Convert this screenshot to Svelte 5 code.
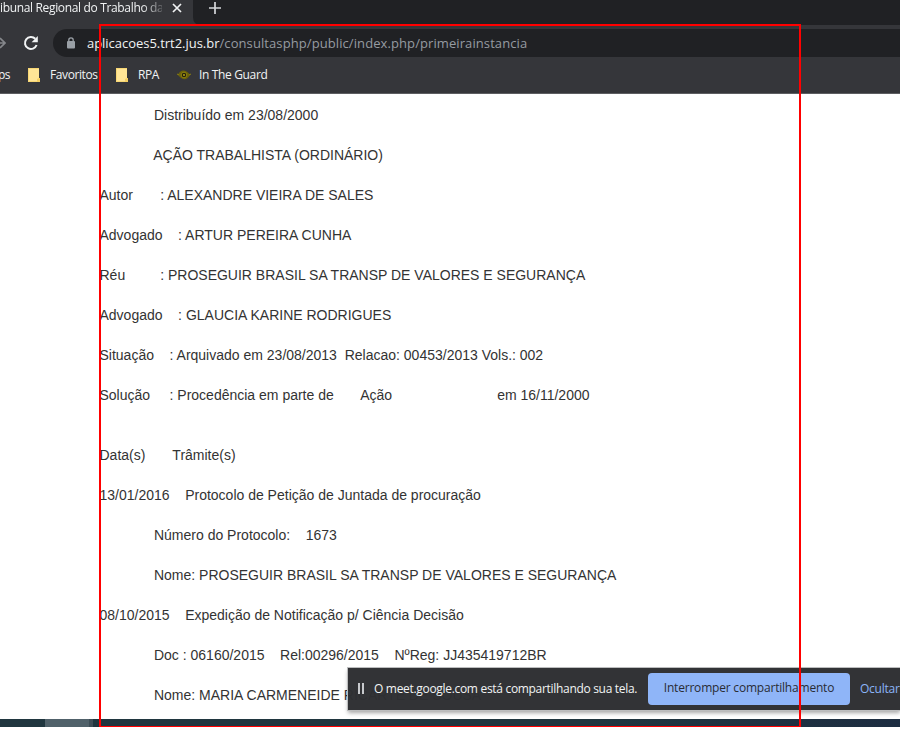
<script>
  const lines = [
    '              Distribuído em 23/08/2000',
    '              AÇÃO TRABALHISTA (ORDINÁRIO)',
    'Autor       : ALEXANDRE VIEIRA DE SALES',
    'Advogado    : ARTUR PEREIRA CUNHA',
    'Réu         : PROSEGUIR BRASIL SA TRANSP DE VALORES E SEGURANÇA',
    'Advogado    : GLAUCIA KARINE RODRIGUES',
    'Situação    : Arquivado em 23/08/2013  Relacao: 00453/2013 Vols.: 002',
    'Solução     : Procedência em parte de       Ação                           em 16/11/2000',
    'Data(s)       Trâmite(s)',
    '13/01/2016    Protocolo de Petição de Juntada de procuração',
    '              Número do Protocolo:    1673',
    '              Nome: PROSEGUIR BRASIL SA TRANSP DE VALORES E SEGURANÇA',
    '08/10/2015    Expedição de Notificação p/ Ciência Decisão',
    '              Doc : 06160/2015    Rel:00296/2015    NºReg: JJ435419712BR',
    '              Nome: MARIA CARMENEIDE RICARTE DE SOUSA'
  ];
</script>

{#snippet folder()}
  <svg class="folder" width="12" height="14" viewBox="0 0 12 14">
    <path d="M0 0h11v10.5h1V14H0z" fill="#ffe596" />
    <path d="M0 0h11v1H1v12h8v1H0z" fill="#f7d774" />
    <path d="M9 14v-3l2-1h1v4z" fill="#f5cf62" />
  </svg>
{/snippet}

<div class="screen">
  <header>
    <div class="tabs">
      <div class="tab">
        <span class="title">ibunal Regional do Trabalho da</span>
        <svg width="10" height="10" viewBox="0 0 10 10"><path d="M1 1l8 8M9 1L1 9" stroke="#f1f3f4" stroke-width="1.7" /></svg>
      </div>
      <svg class="curve" width="8" height="8" viewBox="0 0 8 8"><path d="M0 0Q0 8 8 8H0z" fill="#35363a" /></svg>
      <svg class="plus" width="12" height="12" viewBox="0 0 12 12"><path d="M6 0v12M0 6h12" stroke="#d5d7da" stroke-width="1.7" /></svg>
    </div>
    <div class="toolbar">
      <svg class="forward" width="6" height="12" viewBox="0 0 6 12"><path d="M0 6h4.6M0 1l5 5-5 5" fill="none" stroke="#85878b" stroke-width="1.7" /></svg>
      <svg class="reload" width="16" height="16" viewBox="0 0 16 16">
        <path d="M13.6 10A6 6 0 1 1 12.3 3.8" fill="none" stroke="#f1f3f4" stroke-width="2" />
        <path d="M14.8 1v6.2H8.6z" fill="#f1f3f4" />
      </svg>
      <div class="address">
        <svg width="8" height="12" viewBox="0 0 8 12">
          <path d="M1.8 5V3a2.2 2.2 0 0 1 4.4 0v2" fill="none" stroke="#9aa0a6" stroke-width="1.3" />
          <rect y="4" width="8" height="7.6" rx="1" fill="#9aa0a6" />
        </svg>
        <span class="url"><b>aplicacoes5.trt2.jus.br</b><i>/consultasphp/public/index.php/primeirainstancia</i></span>
      </div>
    </div>
    <nav>
      <span class="apps">ps</span>
      {@render folder()}
      <span class="favorites">Favoritos</span>
      {@render folder()}
      <span class="rpa">RPA</span>
      <svg class="eye" width="14" height="10" viewBox="0 0 14 10">
        <path d="M1 4.5Q3.5 0 7 .5t6 4.5Q10.5 9.5 7 9.2T1 4.5z" fill="#6b6209" />
        <circle cx="7" cy="5" r="2.8" fill="#24210d" stroke="#8d810f" />
        <circle cx="7" cy="5" r="1" fill="#b5a51a" />
        <path d="M0 4l2 1M12 5l2-1" stroke="#8d810f" />
      </svg>
      <span class="guard">In The Guard</span>
    </nav>
  </header>

  <main>
    {#each lines as line, i}
      <p class:section={i === 8}>{line}</p>
    {/each}
  </main>

  <footer><span></span><em></em></footer>

  <aside>
    <svg width="6" height="11" viewBox="0 0 6 11"><path d="M1 0v11M5 0v11" stroke="#d8dadd" stroke-width="1.8" /></svg>
    <span class="message">O meet.google.com está compartilhando sua tela.</span>
    <button>Interromper compartilhamento</button>
    <span class="hide">Ocultar</span>
  </aside>
  <div class="frame"></div>
</div>

<style>
  .screen {
    position: relative;
    width: 900px;
    height: 744px;
    overflow: hidden;
    background: #fff;
    font-family: 'Open Sans', 'Noto Sans', sans-serif;
    font-size: 12px;
    white-space: nowrap;
  }
  svg { display: block; flex: none; }
  header { height: 94px; box-sizing: border-box; background: #35363a; border-bottom: 1px solid #5d5e61; color: #f1f3f4; }
  .tabs { height: 25px; display: flex; background: #202124; }
  .tab { width: 193px; height: 25px; background: #35363a; display: flex; align-items: flex-start; }
  .tab svg { margin: 3px 0 0 10px; }
  .title {
    width: 162px;
    line-height: 16px;
    letter-spacing: -0.34px;
    -webkit-mask-image: linear-gradient(90deg, #000 142px, transparent 168px);
    mask-image: linear-gradient(90deg, #000 142px, transparent 168px);
  }
  .curve { align-self: flex-end; }
  .plus { margin: 2px 0 0 8px; }
  .toolbar { height: 36px; display: flex; align-items: center; }
  .reload { margin-left: 17px; }
  .address { flex: 1; margin-left: 14px; height: 28px; background: #202124; border-radius: 14px 0 0 14px; display: flex; align-items: center; }
  .address svg { margin-left: 14px; }
  .url { margin-left: 12px; font-size: 13px; }
  .url b { font-weight: 400; color: #f1f3f4; letter-spacing: -0.03px; }
  .url i { font-style: normal; color: #969ba1; letter-spacing: 0.09px; }
  nav { height: 28px; display: flex; align-items: center; }
  nav span { line-height: 16px; }
  .apps { margin-left: -2px; width: 30px; letter-spacing: -0.5px; }
  .favorites { margin-left: 10px; width: 66px; letter-spacing: -0.4px; }
  .rpa { margin-left: 10px; width: 39px; letter-spacing: -0.5px; }
  .guard { margin-left: 8px; letter-spacing: -0.35px; }
  main { padding: 11px 0 0 99.5px; font: 14px/20px 'Liberation Sans', Arial, sans-serif; color: #333; }
  p { margin: 0 0 20px; white-space: pre; }
  .section { margin-top: 40px; }
  footer {
    position: absolute; left: 0; right: 0; top: 719px; height: 8px;
    display: flex; background: linear-gradient(90deg, #20363f 65%, #1d2d41);
  }
  footer span { margin-left: 45px; width: 44px; background: #50616a; }
  footer em { width: 4px; background: #3d4d56; }
  aside {
    position: absolute; left: 348px; top: 668px; width: 552px; height: 42px;
    display: flex; align-items: center;
    background: rgba(46, 47, 50, 0.98); color: #f1f3f4;
    box-shadow: 0 0 0 1px #bcbdbe, 0 3px 4px rgba(0, 0, 0, 0.35);
  }
  aside svg { margin: 0 0 1px 10px; }
  aside span { line-height: 16px; }
  .message { margin-left: 10px; width: 274px; letter-spacing: -0.31px; }
  button {
    flex: none; width: 202px; height: 32px; padding: 0 0 2px; border: 0; border-radius: 4px;
    background: #8fb5f8; color: #292c35; font: 12px/16px 'Open Sans', sans-serif; letter-spacing: -0.2px;
  }
  .hide { margin-left: 10px; color: #8ab4f8; letter-spacing: -0.25px; }
  .frame {
    position: absolute; left: 99px; top: 24px; width: 702px; height: 703px; box-sizing: border-box;
    border: 2px solid #f00; border-bottom-width: 1px; pointer-events: none;
  }
</style>
